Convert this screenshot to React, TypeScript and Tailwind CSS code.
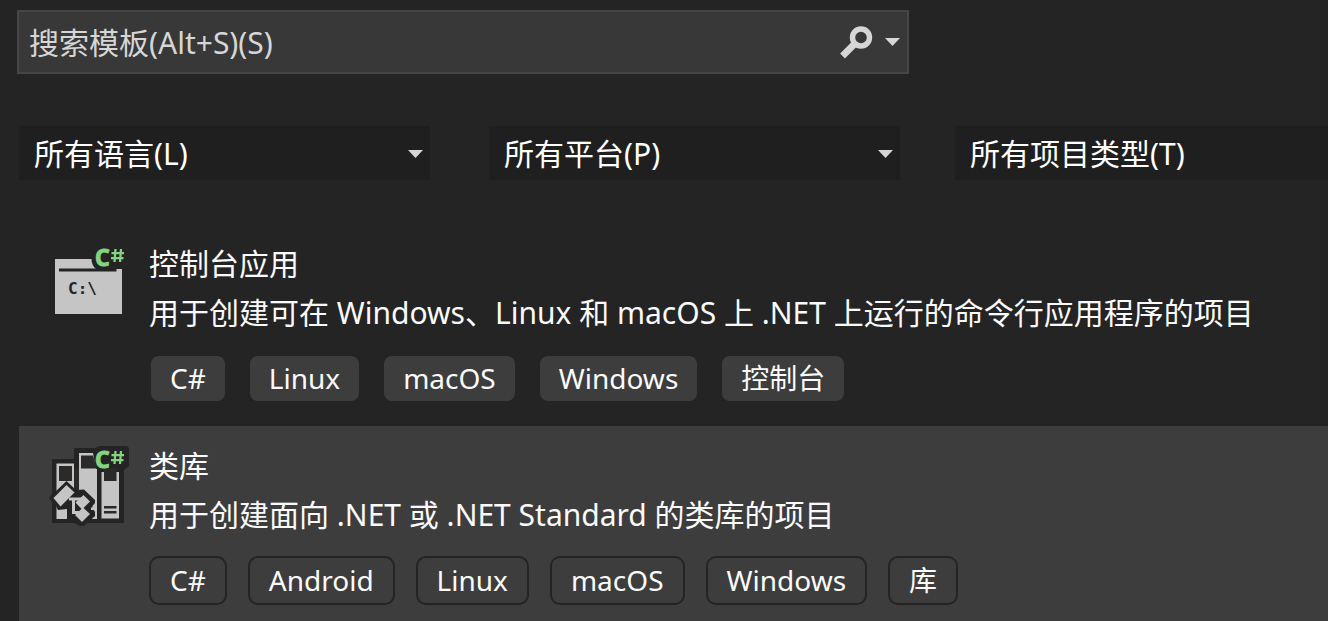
import React from 'react';

const Caret = ({ className = '' }: { className?: string }) => (
  <svg className={className} width="15" height="8" viewBox="0 0 15 8" aria-hidden="true">
    <path d="M0 0H15L7.500 8Z" fill="#d6d6d6" />
  </svg>
);

const CSharpBadge = () => (
  <g>
    <text
      x="55"
      y="31"
      fontSize="23"
      fontWeight="700"
      fontFamily="'Noto Sans', sans-serif"
      fill="#85d381"
      stroke="#85d381"
      strokeWidth="1"
    >
      C
    </text>
    <path d="M75.500 14L74.500 27M81 14L80 27M71.500 18.200H84M71 23.200H83.500" stroke="#85d381" strokeWidth="2.300" />
  </g>
);

const ConsoleIcon = () => (
  <svg width="100" height="100" viewBox="0 0 100 100" aria-hidden="true">
    <path d="M15 24H51.500C51.500 28 53 31.500 56 34H82V79H15Z" fill="#c5c5c5" />
    <path d="M19 33.500H76.500V36.500H19Z" fill="#242424" />
    <text x="28" y="59" fontSize="16" fontWeight="700" fill="#242424" fontFamily="'DejaVu Sans Mono', monospace">
      C:\
    </text>
    <CSharpBadge />
  </svg>
);

const LibraryIcon = () => (
  <svg width="100" height="100" viewBox="0 2 100 100" aria-hidden="true">
    <path
      d="M12 24H34V13H55L59 11H87L89 13V31L84 35V88H46L42 91L37 88H12V67L9 63L12 59Z"
      fill="#242424"
    />
    <g fill="#c5c5c5">
      <path d="M16.500 28.500H34V84H16.500Z" />
      <path d="M39 18H53L56 34H57V84H39Z" />
      <path d="M61.500 37H79V83.500H61.500Z" />
    </g>
    <g fill="#2b2a29">
      <path d="M19 31H32V46H19Z" />
      <path d="M41 20.500H53L57 33.500H41Z" />
      <path d="M64 33H76.500V46H64Z" />
      <path d="M64 71H76.500V73.500H64ZM64 76H76.500V78.500H64Z" />
      <path d="M34 34H39V58H34Z" />
    </g>
    <path
      d="M11 61L26.500 46L36 55L44 54.500L55 65V68L52.500 71V73L55 77V81L44 91H40L27 84V74L18 75Z"
      fill="#242424"
    />
    <path d="M29 64H43M33.500 64V77.500H39" fill="none" stroke="#c5c5c5" strokeWidth="3" />
    <g fill="#c5c5c5">
      <path d="M13.500 63L26.500 50L34.500 57.500L20.500 71.500Z" />
      <path d="M35.500 67.500L43.500 60L50 66.500L42 74.500Z" />
      <path d="M35 80L43 72.500L50 79L42 87Z" />
      <path d="M51 72.500H54V75H51ZM17 80L22 78L27 80V84H17Z" />
    </g>
    <g transform="translate(0 2)">
      <CSharpBadge />
    </g>
  </svg>
);

const Filter = ({ id, label, text }: { id: string; label: string; text: string }) => (
  <div className="relative w-[411px] shrink-0">
    <select
      id={id}
      aria-label={label}
      className="block h-[54px] w-full appearance-none bg-[#1f1f1f] pl-[15px] pr-10 pt-px text-[30px] text-white outline-none"
    >
      <option>{text}</option>
    </select>
    <Caret className="pointer-events-none absolute right-[7px] top-6" />
  </div>
);

type Template = {
  name: string;
  description: string;
  tags: string[];
  icon: React.ReactNode;
  selected?: boolean;
};

const templates: Template[] = [
  {
    name: '控制台应用',
    description: '用于创建可在 Windows、Linux 和 macOS 上 .NET 上运行的命令行应用程序的项目',
    tags: ['C#', 'Linux', 'macOS', 'Windows', '控制台'],
    icon: <ConsoleIcon />,
  },
  {
    name: '类库',
    description: '用于创建面向 .NET 或 .NET Standard 的类库的项目',
    tags: ['C#', 'Android', 'Linux', 'macOS', 'Windows', '库'],
    icon: <LibraryIcon />,
    selected: true,
  },
];

const TemplateRow = ({ name, description, tags, icon, selected }: Template) => (
  <li
    className={`flex h-[202px] items-start whitespace-nowrap pl-[21px] pt-[11px] ${
      selected ? 'bg-[#3d3d3d]' : ''
    }`}
  >
    <div className="shrink-0">{icon}</div>
    <div className="pl-[9px] pt-[5px]">
      <h2 className="text-[30px] leading-[48px]">{name}</h2>
      <p className="text-[30px] leading-[50px]">{description}</p>
      <ul className="mt-4 flex gap-[21px]">
        {tags.map((tag) => (
          <li
            key={tag}
            className="h-[49px] rounded-[10px] border-2 border-[#242424] bg-[#3d3d3d] px-[19px] text-[28px] leading-[45px]"
          >
            {tag}
          </li>
        ))}
      </ul>
    </div>
  </li>
);

export default function App() {
  return (
    <main className="min-h-screen overflow-hidden bg-[#242424] pt-[10px] font-['Noto_Sans','Noto_Sans_CJK_SC',sans-serif] text-[#fafafa]">
      <div className="ml-[17px] flex h-16 w-[892px] items-center border-2 border-[#464646] bg-[#383838] pr-[7px]">
        <input
          type="search"
          aria-label="搜索模板"
          placeholder="搜索模板(Alt+S)(S)"
          className="h-full min-w-0 flex-1 bg-transparent pl-[10px] text-[30px] text-[#d6d6d6] outline-none placeholder:text-[#d6d6d6]"
        />
        <button type="button" aria-label="搜索" className="mr-3">
          <svg width="34" height="34" viewBox="0 0 34 34" aria-hidden="true">
            <circle cx="22" cy="12.500" r="8.500" fill="none" stroke="#d6d6d6" strokeWidth="5.400" />
            <path d="M16 18.500L3.500 31" stroke="#d6d6d6" strokeWidth="6.800" />
          </svg>
        </button>
        <button type="button" aria-label="搜索选项">
          <Caret />
        </button>
      </div>

      <div className="ml-[19px] mt-[52px] flex gap-[55px]">
        <div className="flex shrink-0 gap-[59px]">
          <Filter id="language" label="语言" text="所有语言(L)" />
          <Filter id="platform" label="平台" text="所有平台(P)" />
        </div>
        <Filter id="type" label="项目类型" text="所有项目类型(T)" />
      </div>

      <ul className="ml-[19px] mt-11">
        {templates.map((template) => (
          <TemplateRow key={template.name} {...template} />
        ))}
      </ul>
    </main>
  );
}
